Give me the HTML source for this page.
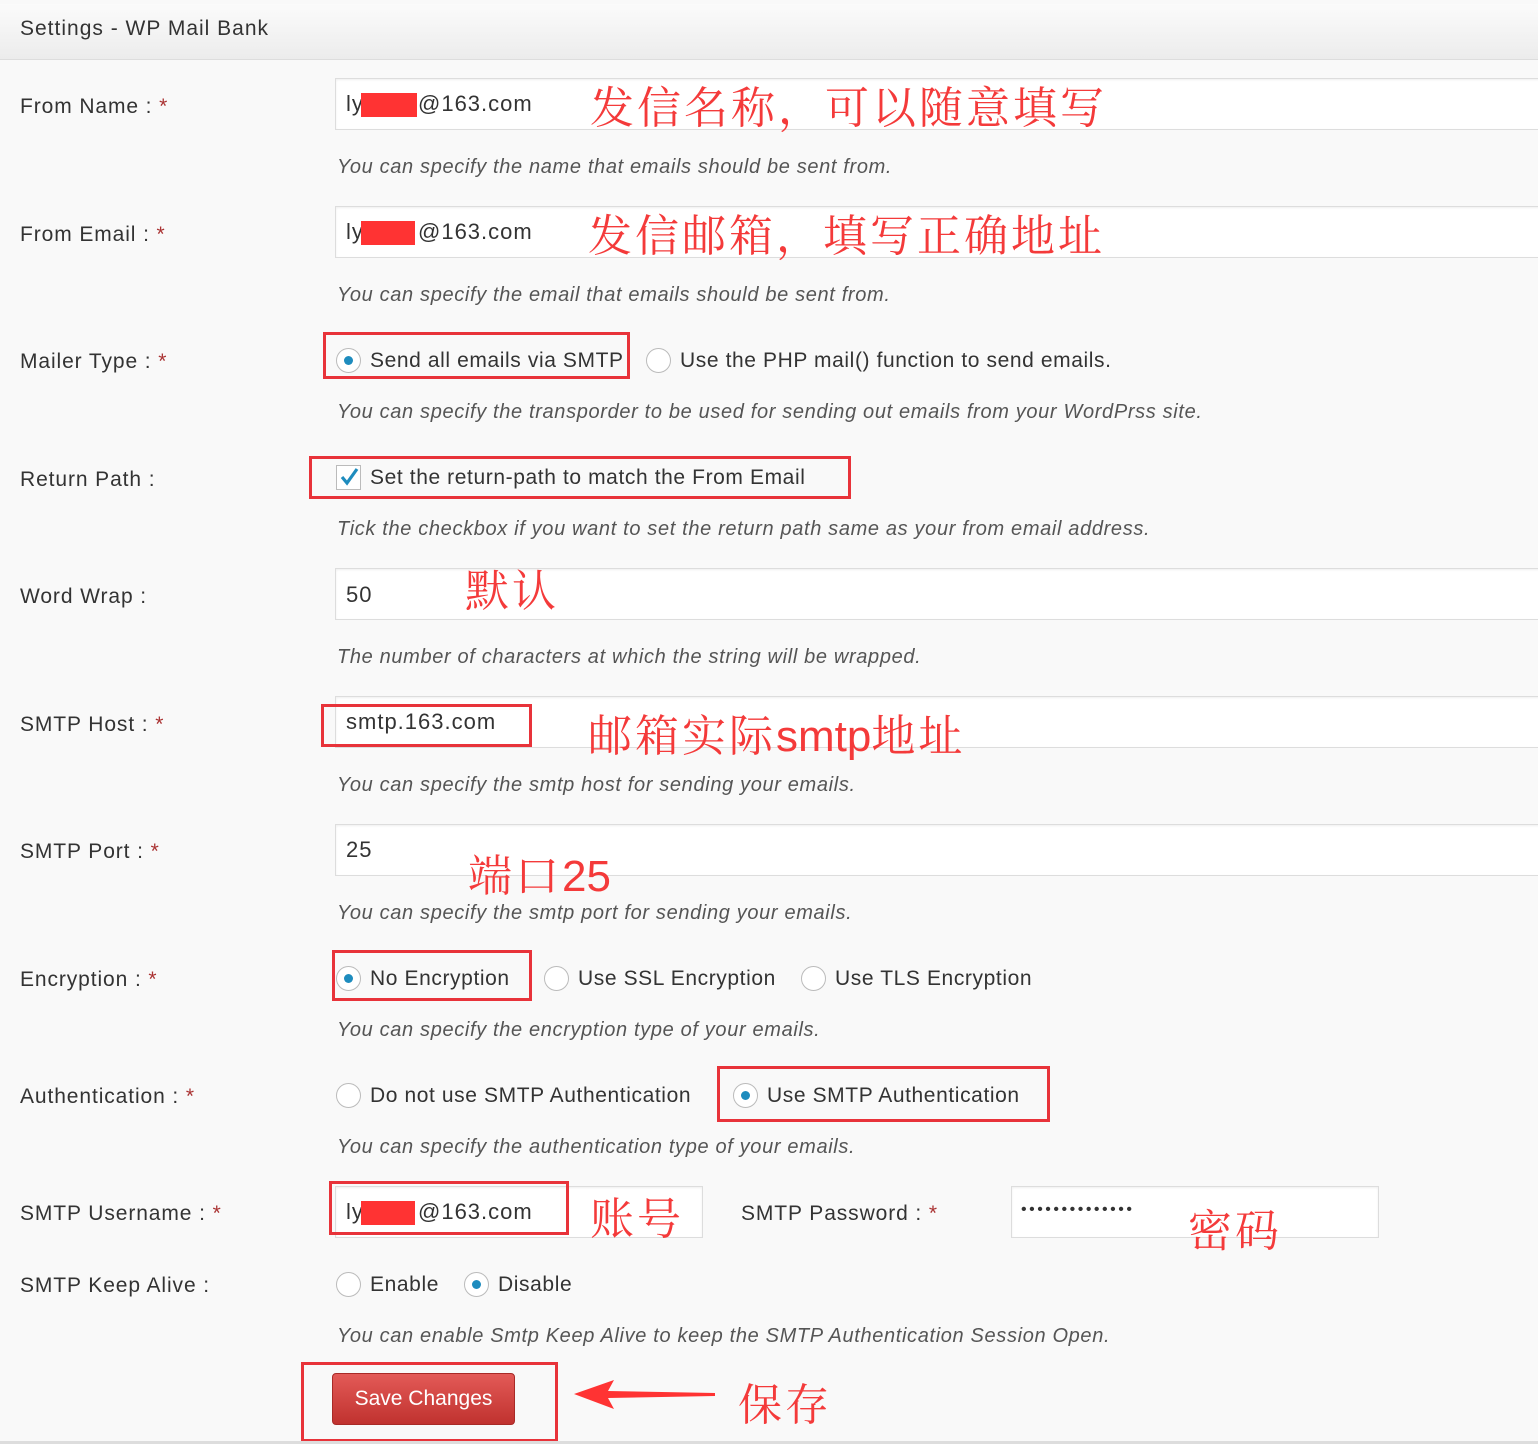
<!DOCTYPE html>
<html><head><meta charset="utf-8"><style>
*{margin:0;padding:0;box-sizing:border-box}
body{width:1538px;height:1444px;background:#f9f9f9;position:relative;overflow:hidden;font-family:"Liberation Sans","Noto Sans CJK SC",sans-serif;color:#444}
.hdr{position:absolute;left:0;top:4px;width:1538px;height:56px;background:linear-gradient(#fbfbfb,#ececec);border-bottom:1px solid #ddd}
.hdr span{position:absolute;left:20px;top:13px;font-size:21px;color:#333;letter-spacing:1px}
.a{position:absolute;white-space:nowrap}
.lbl{font-size:21px;color:#333;line-height:30px;letter-spacing:0.9px}
.lbl b{color:#a33;font-weight:normal}
.help{font-size:20px;font-style:italic;color:#555;line-height:28px;letter-spacing:0.65px}
.inp{position:absolute;background:#fff;border:1px solid #ddd;box-shadow:inset 0 1px 2px rgba(0,0,0,.07)}
.val{font-size:22px;color:#333;line-height:30px;letter-spacing:1px}
.opt{font-size:21px;color:#333;line-height:30px;letter-spacing:0.6px}
.rad{position:absolute;width:25px;height:25px;border-radius:50%;border:1.5px solid #bbb;background:#fff}
.rad.on::after{content:"";position:absolute;left:7px;top:7px;width:9px;height:9px;border-radius:50%;background:#1e8cbe}
.box{position:absolute;border:3px solid #e8333a}
.cn{color:#f43a3a;font-family:"Noto Serif CJK SC","Liberation Sans",serif;font-size:44px;line-height:50px;letter-spacing:3px}
.red{position:absolute;background:#f33;height:24px}
</style></head><body>
<div class="hdr"><span>Settings - WP Mail Bank</span></div>

<div class="a lbl" style="left:20px;top:92px">From Name : <b>*</b></div>
<div class="inp" style="left:335px;top:78px;width:1210px;height:52px"></div>
<div class="a val" style="left:346px;top:89px">ly</div><div class="a val" style="left:418px;top:89px">@163.com</div>
<div class="red" style="left:361px;top:93px;width:56px"></div>
<div class="a cn" style="left:590px;top:79px">发信名称，可以随意填写</div>
<div class="a help" style="left:337px;top:153px">You can specify the name that emails should be sent from.</div>

<div class="a lbl" style="left:20px;top:220px">From Email : <b>*</b></div>
<div class="inp" style="left:335px;top:206px;width:1210px;height:52px"></div>
<div class="a val" style="left:346px;top:217px">ly</div><div class="a val" style="left:418px;top:217px">@163.com</div>
<div class="red" style="left:361px;top:221px;width:54px"></div>
<div class="a cn" style="left:588px;top:207px">发信邮箱，填写正确地址</div>
<div class="a help" style="left:337px;top:281px">You can specify the email that emails should be sent from.</div>

<div class="a lbl" style="left:20px;top:347px">Mailer Type : <b>*</b></div>
<div class="rad on" style="left:336px;top:348px"></div>
<div class="a opt" style="left:370px;top:346px">Send all emails via SMTP</div>
<div class="rad" style="left:646px;top:348px"></div>
<div class="a opt" style="left:680px;top:346px">Use the PHP mail() function to send emails.</div>
<div class="box" style="left:323px;top:332px;width:307px;height:47px"></div>
<div class="a help" style="left:337px;top:398px">You can specify the transporder to be used for sending out emails from your WordPrss site.</div>

<div class="a lbl" style="left:20px;top:465px">Return Path :</div>
<div class="a" style="left:336px;top:465px;width:25px;height:25px;border:1.5px solid #bbb;background:#fff"><svg width="22" height="22" viewBox="0 0 22 22" style="position:absolute;left:1px;top:0"><path d="M4 11 L9 17 L19 3" fill="none" stroke="#1e8cbe" stroke-width="3.2"/></svg></div>
<div class="a opt" style="left:370px;top:463px">Set the return-path to match the From Email</div>
<div class="box" style="left:309px;top:456px;width:542px;height:43px"></div>
<div class="a help" style="left:337px;top:515px">Tick the checkbox if you want to set the return path same as your from email address.</div>

<div class="a lbl" style="left:20px;top:582px">Word Wrap :</div>
<div class="inp" style="left:335px;top:568px;width:1210px;height:52px"></div>
<div class="a val" style="left:346px;top:580px">50</div>
<div class="a cn" style="left:465px;top:562px">默认</div>
<div class="a help" style="left:337px;top:643px">The number of characters at which the string will be wrapped.</div>

<div class="a lbl" style="left:20px;top:710px">SMTP Host : <b>*</b></div>
<div class="inp" style="left:335px;top:696px;width:1210px;height:52px"></div>
<div class="a val" style="left:346px;top:707px">smtp.163.com</div>
<div class="box" style="left:321px;top:704px;width:211px;height:43px"></div>
<div class="a cn" style="left:588px;top:707px">邮箱实际<span style="font-family:'Liberation Sans',sans-serif;letter-spacing:0">smtp</span>地址</div>
<div class="a help" style="left:337px;top:771px">You can specify the smtp host for sending your emails.</div>

<div class="a lbl" style="left:20px;top:837px">SMTP Port : <b>*</b></div>
<div class="inp" style="left:335px;top:824px;width:1210px;height:52px"></div>
<div class="a val" style="left:346px;top:835px">25</div>
<div class="a cn" style="left:468px;top:847px">端口<span style="font-family:'Liberation Sans',sans-serif;letter-spacing:0">25</span></div>
<div class="a help" style="left:337px;top:899px">You can specify the smtp port for sending your emails.</div>

<div class="a lbl" style="left:20px;top:965px">Encryption : <b>*</b></div>
<div class="rad on" style="left:336px;top:966px"></div>
<div class="a opt" style="left:370px;top:964px">No Encryption</div>
<div class="rad" style="left:544px;top:966px"></div>
<div class="a opt" style="left:578px;top:964px">Use SSL Encryption</div>
<div class="rad" style="left:801px;top:966px"></div>
<div class="a opt" style="left:835px;top:964px">Use TLS Encryption</div>
<div class="box" style="left:332px;top:950px;width:200px;height:51px"></div>
<div class="a help" style="left:337px;top:1016px">You can specify the encryption type of your emails.</div>

<div class="a lbl" style="left:20px;top:1082px">Authentication : <b>*</b></div>
<div class="rad" style="left:336px;top:1083px"></div>
<div class="a opt" style="left:370px;top:1081px">Do not use SMTP Authentication</div>
<div class="rad on" style="left:733px;top:1083px"></div>
<div class="a opt" style="left:767px;top:1081px">Use SMTP Authentication</div>
<div class="box" style="left:717px;top:1066px;width:333px;height:56px"></div>
<div class="a help" style="left:337px;top:1133px">You can specify the authentication type of your emails.</div>

<div class="a lbl" style="left:20px;top:1199px">SMTP Username : <b>*</b></div>
<div class="inp" style="left:335px;top:1186px;width:368px;height:52px"></div>
<div class="a val" style="left:346px;top:1197px">ly</div><div class="a val" style="left:418px;top:1197px">@163.com</div>
<div class="red" style="left:361px;top:1201px;width:54px"></div>
<div class="box" style="left:329px;top:1181px;width:240px;height:54px"></div>
<div class="a cn" style="left:590px;top:1190px">账号</div>
<div class="a lbl" style="left:741px;top:1199px">SMTP Password : <b>*</b></div>
<div class="inp" style="left:1011px;top:1186px;width:368px;height:52px"></div>
<div class="a" style="left:1021px;top:1198px;font-size:16px;line-height:24px;color:#333;letter-spacing:2.5px">••••••••••••••</div>
<div class="a cn" style="left:1188px;top:1202px">密码</div>

<div class="a lbl" style="left:20px;top:1271px">SMTP Keep Alive :</div>
<div class="rad" style="left:336px;top:1272px"></div>
<div class="a opt" style="left:370px;top:1270px">Enable</div>
<div class="rad on" style="left:464px;top:1272px"></div>
<div class="a opt" style="left:498px;top:1270px">Disable</div>
<div class="a help" style="left:337px;top:1322px">You can enable Smtp Keep Alive to keep the SMTP Authentication Session Open.</div>

<div class="a" style="left:332px;top:1373px;width:183px;height:52px;border-radius:4px;background:linear-gradient(#e35a57,#c0322f);border:1px solid #a82a27;color:#fff;font-size:21px;line-height:50px;text-align:center">Save Changes</div>
<div class="box" style="left:301px;top:1362px;width:257px;height:80px"></div>
<svg class="a" style="left:570px;top:1376px" width="150" height="40"><path d="M4 18 L44 4 L38 15 L145 17 L145 20 L38 22 L44 33 Z" fill="#f33"/></svg>
<div class="a cn" style="left:738px;top:1376px">保存</div>
<div class="a" style="left:0;top:1441px;width:1538px;height:3px;background:#ddd"></div>
</body></html>
